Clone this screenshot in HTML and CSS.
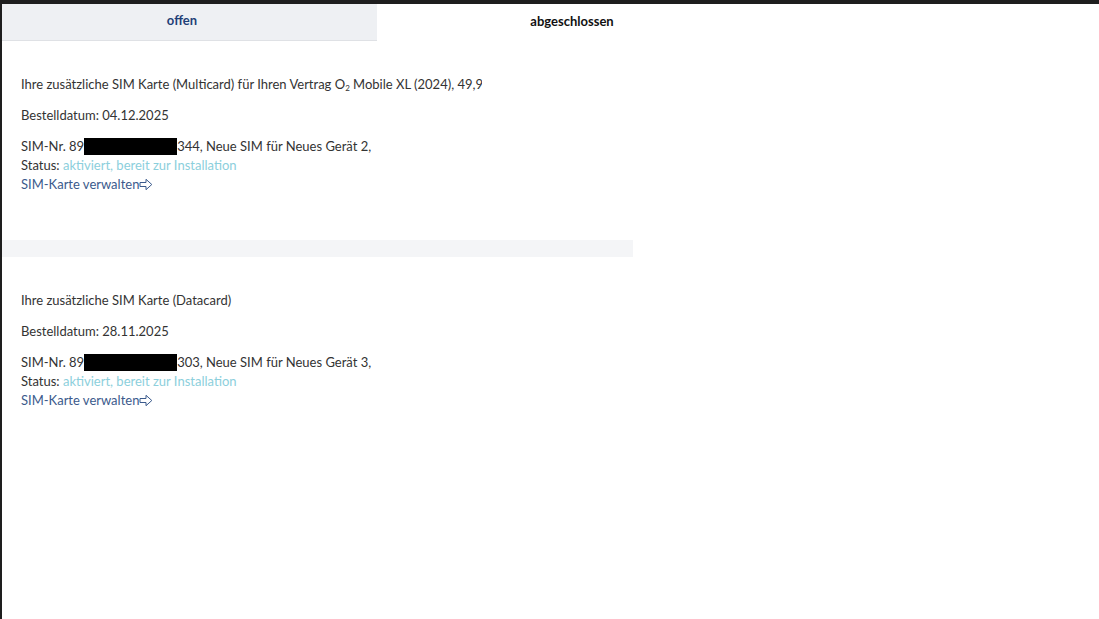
FILE: index.html
```html
<!DOCTYPE html>
<html lang="de">
<head>
    <meta charset="UTF-8">
    <meta name="viewport" content="width=device-width, initial-scale=1.0">
    <title>Bestellungen</title>
    <link rel="stylesheet" href="styles.css">
</head>
<body>
    <div class="frame">
        <div class="tabs">
            <div class="tab tab-open">offen</div>
            <div class="tab tab-done">abgeschlossen</div>
        </div>

        <div class="order">
            <p class="order-title">Ihre zusätzliche SIM Karte (Multicard) für Ihren Vertrag O<sub>2</sub> Mobile XL (2024), 49,99 €</p>
            <p>Bestelldatum: 04.12.2025</p>
            <div class="sim">
                <div>SIM-Nr. 89<span class="redacted"></span>344, Neue SIM für Neues Gerät 2,</div>
                <div>Status: <span class="status">aktiviert, bereit zur Installation</span></div>
                <a href="#" class="manage">SIM-Karte verwalten<svg viewBox="0 0 14 13" width="14" height="13"><path d="M1 4.5h6V1.3l5.8 5.2L7 11.7V8.5H1z" fill="none" stroke="currentColor" stroke-width="1" stroke-linejoin="round"/></svg></a>
            </div>
        </div>

        <div class="divider"></div>

        <div class="order">
            <p class="order-title">Ihre zusätzliche SIM Karte (Datacard)</p>
            <p>Bestelldatum: 28.11.2025</p>
            <div class="sim">
                <div>SIM-Nr. 89<span class="redacted"></span>303, Neue SIM für Neues Gerät 3,</div>
                <div>Status: <span class="status">aktiviert, bereit zur Installation</span></div>
                <a href="#" class="manage">SIM-Karte verwalten<svg viewBox="0 0 14 13" width="14" height="13"><path d="M1 4.5h6V1.3l5.8 5.2L7 11.7V8.5H1z" fill="none" stroke="currentColor" stroke-width="1" stroke-linejoin="round"/></svg></a>
            </div>
        </div>
    </div>
</body>
</html>
```

FILE: styles.css
```css
html, body {
    margin: 0;
    height: 100%;
}
body {
    background: #1e1e1e;
    font-family: Lato, "Open Sans", sans-serif;
    color: #333;
    font-size: 13px;
    padding: 4px 0 0 2px;
    box-sizing: border-box;
}
.frame {
    background: #fff;
    height: 100%;
}
.tabs {
    display: flex;
    width: 765px;
}
.tab {
    height: 37px;
    display: flex;
    align-items: center;
    justify-content: center;
    font-weight: bold;
    font-size: 13px;
    padding-bottom: 4px;
    box-sizing: border-box;
}
.tab-open {
    width: 375px;
    padding-right: 15px;
    background: #eef0f3;
    border-bottom: 1px solid #dfe1e5;
    color: #1f3f77;
}
.tab-done {
    flex: 1;
    color: #111;
}
.order {
    width: 461px;
    padding: 34px 0 46px 19px;
    line-height: 19px;
}
.order p {
    margin: 0 0 12px;
}
.order-title {
    white-space: nowrap;
    overflow: hidden;
}
.order-title sub {
    font-size: 8px;
    vertical-align: -2px;
    line-height: 0;
}
.redacted {
    display: inline-block;
    width: 93px;
    height: 17px;
    background: #000;
    vertical-align: -4px;
}
.status {
    color: #8ccfdc;
}
.manage {
    color: #3b5a8c;
    text-decoration: none;
    display: inline-flex;
    align-items: center;
}
.divider {
    width: 631px;
    height: 17px;
    background: #f4f5f7;
}
```
